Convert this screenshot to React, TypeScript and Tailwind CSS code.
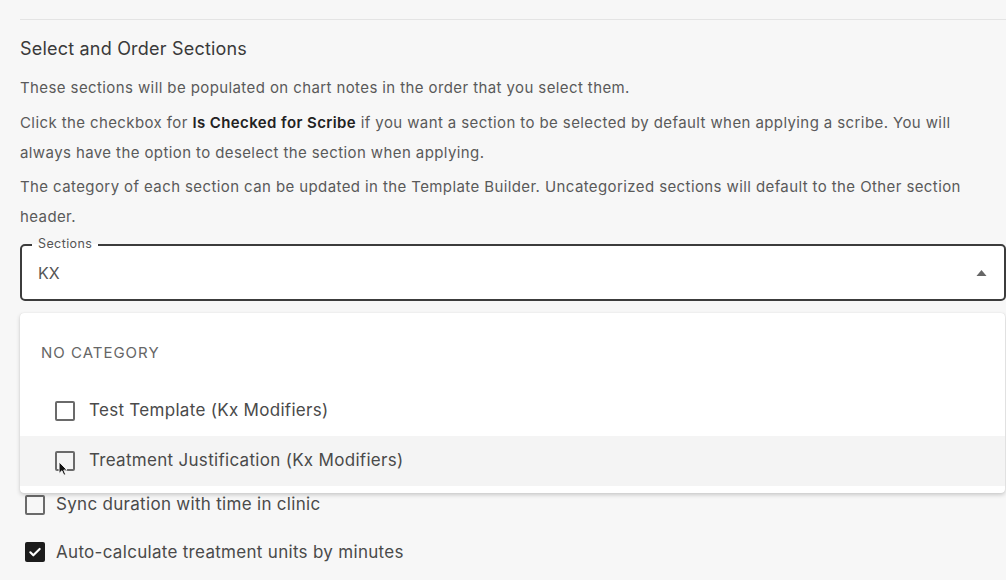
function Box({ checked = false }: { checked?: boolean }) {
  return checked ? (
    <span className="flex items-center justify-center w-[20px] h-[20px] rounded-[2px] bg-[#1c1c1c] shrink-0">
      <svg viewBox="0 0 24 24" className="w-[16px] h-[16px]" fill="none" stroke="white" strokeWidth={3.2} strokeLinecap="round" strokeLinejoin="round">
        <path d="M5 12.5l4.5 4.5L19 7.5" />
      </svg>
    </span>
  ) : (
    <span className="block w-[20px] h-[20px] rounded-[2px] border-2 border-[#6a6a6a] shrink-0" />
  )
}

export default function App() {
  return (
    <div className="relative w-[1006px] h-[580px] overflow-hidden bg-[#f7f7f7] pl-[20px] text-[#5a5a5a]" style={{ fontFamily: 'Inter, "Noto Sans", sans-serif' }}>
      <div className="pt-[19px] w-[990px]">
        <div className="border-t border-[#e4e4e4]" />

        {/* Header + help text */}
        <h2 className="mt-[18px] text-[18px] leading-[22px] tracking-[0.2px] text-[#3a3a3a]">Select and Order Sections</h2>
        <div className="mt-[13px] text-[15px] leading-[30px] tracking-[0.4px] pr-[30px]">
          <p>These sections will be populated on chart notes in the order that you select them.</p>
          <p className="mt-[5px]">
            Click the checkbox for <b className="font-semibold text-[#222]">Is Checked for Scribe</b> if you want a section to be selected by default when applying a scribe. You will always have the option to deselect the section when applying.
          </p>
          <p className="mt-[4px]">
            The category of each section can be updated in the Template Builder. Uncategorized sections will default to the Other section header.
          </p>
        </div>

        {/* Sections select */}
        <div className="relative mt-[12px] mr-[4px] h-[57px] rounded-[5px] border-2 border-[#3c3c3c] bg-white flex items-center px-[16px]">
          <span className="absolute -top-[11px] left-[10px] px-[6px] text-[12.5px] leading-[18px] tracking-[0.4px] text-[#555]" style={{ background: 'linear-gradient(#f7f7f7 50%, #fff 50%)' }}>Sections</span>
          <span className="flex-1 text-[16px] text-[#555] pt-[1px]">KX</span>
          <svg viewBox="0 0 10 6" className="w-[11px] h-[6px] mr-[1px]" fill="#666"><path d="M0 6L5 0l5 6z" /></svg>
        </div>

        {/* Options below dropdown */}
        <div className="mt-[191px] pl-[5px] flex flex-col gap-[22px] text-[17px] tracking-[0.3px] text-[#4a4a4a]">
          <div className="flex items-center gap-[11px]">
            <Box />
            <span>Sync duration with time in clinic</span>
          </div>
          <div className="flex items-center gap-[11px]">
            <Box checked />
            <span>Auto-calculate treatment units by minutes</span>
          </div>
        </div>
      </div>

      {/* Dropdown menu */}
      <div className="absolute left-[20px] top-[313px] w-[985px] h-[180px] bg-white rounded-[4px] shadow-[0_2px_4px_rgba(0,0,0,0.18),0_0_1px_rgba(0,0,0,0.15)] pt-[29px]">
        <div className="pl-[21px] text-[15px] leading-[22px] text-[#666] tracking-[1px]">NO CATEGORY</div>
        <div className="mt-[22px] h-[50px] flex items-center pl-[35px] gap-[14px] text-[17px] tracking-[0.3px] text-[#4a4a4a]">
          <Box />
          <span>Test Template (Kx Modifiers)</span>
        </div>
        <div className="h-[50px] flex items-center pl-[35px] gap-[14px] text-[17px] tracking-[0.3px] text-[#4a4a4a] bg-[#f4f4f4]">
          <span className="relative">
            <Box />
            <svg viewBox="0 0 12 18" className="absolute left-[3px] top-[10px] w-[11px] h-[16px]">
              <path d="M1 1v13l3.2-3 2.2 5 2-0.9-2.1-4.9H10z" fill="#111" stroke="#fff" strokeWidth={1} />
            </svg>
          </span>
          <span>Treatment Justification (Kx Modifiers)</span>
        </div>
      </div>
    </div>
  )
}
